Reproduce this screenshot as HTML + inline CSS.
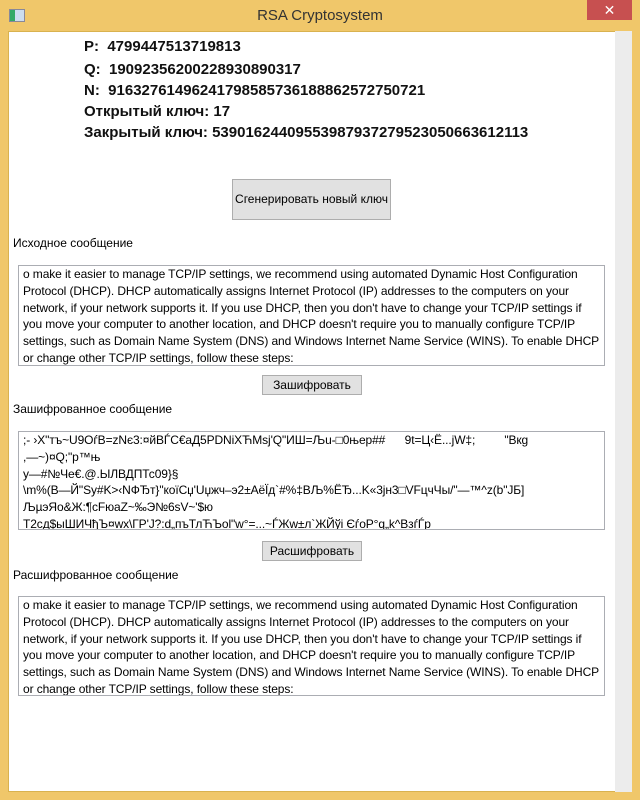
<!DOCTYPE html>
<html><head><meta charset="utf-8"><style>
body{margin:0;width:640px;height:800px;background:#f0c76a;font-family:"Liberation Sans","Noto Sans CJK SC",sans-serif;position:relative;overflow:hidden}
.title{position:absolute;top:0;left:0;width:640px;height:31px;text-align:center;line-height:31px;font-size:15px;color:#333}
.close{position:absolute;top:0;right:8px;width:45px;height:20px;background:#c75050;color:#fff;text-align:center;line-height:20px;font-size:14px}
.icon{position:absolute;left:9px;top:9px;width:14px;height:11px;border:1px solid #889;background:linear-gradient(90deg,#3a6 0 5px,#cde 5px)}
.client{position:absolute;left:8px;top:31px;width:624px;height:761px;background:#fff;border:1px solid #d9b24f;box-sizing:border-box}
.sb{position:absolute;left:615px;top:31px;width:17px;height:761px;background:#ececec}
.a{position:absolute;font-size:12px;color:#000}
.h{position:absolute;left:84px;font-size:15px;font-weight:bold;color:#111}
.btn{position:absolute;background:#e1e1e1;border:1px solid #adadad;box-sizing:border-box;text-align:center;font-size:12px}
.tb{position:absolute;left:18px;width:587px;border:1px solid #abadb3;box-sizing:border-box;padding:0 4px;font-size:12px;line-height:16.8px;white-space:pre-wrap;overflow:hidden;letter-spacing:-0.1px}
</style></head><body>
<div class="title">RSA Cryptosystem</div><div class="icon"></div><div class="close">✕</div>
<div class="client"></div><div class="sb"></div>
<div class="h" style="top:38px">P:&nbsp; 4799447513719813</div>
<div class="h" style="top:61px">Q:&nbsp; 19092356200228930890317</div>
<div class="h" style="top:82px">N:&nbsp; 91632761496241798585736188862572750721</div>
<div class="h" style="top:103px">Открытый ключ: 17</div>
<div class="h" style="top:124px">Закрытый ключ: 53901624409553987937279523050663612113</div>
<div class="btn" style="left:232px;top:179px;width:159px;height:41px;line-height:39px">Сгенерировать новый ключ</div>
<div class="a" style="left:13px;top:236px">Исходное сообщение</div>
<div class="tb" style="top:265px;height:101px">o make it easier to manage TCP/IP settings, we recommend using automated Dynamic Host Configuration Protocol (DHCP). DHCP automatically assigns Internet Protocol (IP) addresses to the computers on your network, if your network supports it. If you use DHCP, then you don't have to change your TCP/IP settings if you move your computer to another location, and DHCP doesn't require you to manually configure TCP/IP settings, such as Domain Name System (DNS) and Windows Internet Name Service (WINS). To enable DHCP or change other TCP/IP settings, follow these steps:</div>
<div class="btn" style="left:262px;top:375px;width:100px;height:20px;line-height:18px">Зашифровать</div>
<div class="a" style="left:13px;top:402px">Зашифрованное сообщение</div>
<div class="tb" style="top:431px;height:99px;white-space:pre">;- ›X"тъ~U9OѓB=zNє3:¤йBЃC€аД5PDNiXЋMsj'Q"ИШ=Љu-□0њер##      9t=Ц‹Ё...jW‡;         "Вкg
,—~)¤Q;"р™њ
у—#№Че€.@.ЫЛВДПТс09}§
\m%(В—Й"Sy#K>‹NФЂт}"коїCџ'Uџжч–э2±АёЇд`#%‡ВЉ%ЁЂ...K«3jн3□VFцчЧы/"—™^z(b"JБ]
ЉµэЯо&Ж:¶сFюаZ~‰Э№6sV~'$ю
T2сд$ыШИЧђЪ¤wx\ГР'J?:d„пъТлЋЪоl"w°=...~ЃЖw±л`ЖЙўі ЄѓоР°q„k^ВзѓЃр</div>
<div class="btn" style="left:262px;top:541px;width:100px;height:20px;line-height:18px">Расшифровать</div>
<div class="a" style="left:13px;top:568px">Расшифрованное сообщение</div>
<div class="tb" style="top:596px;height:100px">o make it easier to manage TCP/IP settings, we recommend using automated Dynamic Host Configuration Protocol (DHCP). DHCP automatically assigns Internet Protocol (IP) addresses to the computers on your network, if your network supports it. If you use DHCP, then you don't have to change your TCP/IP settings if you move your computer to another location, and DHCP doesn't require you to manually configure TCP/IP settings, such as Domain Name System (DNS) and Windows Internet Name Service (WINS). To enable DHCP or change other TCP/IP settings, follow these steps:</div>
</body></html>
